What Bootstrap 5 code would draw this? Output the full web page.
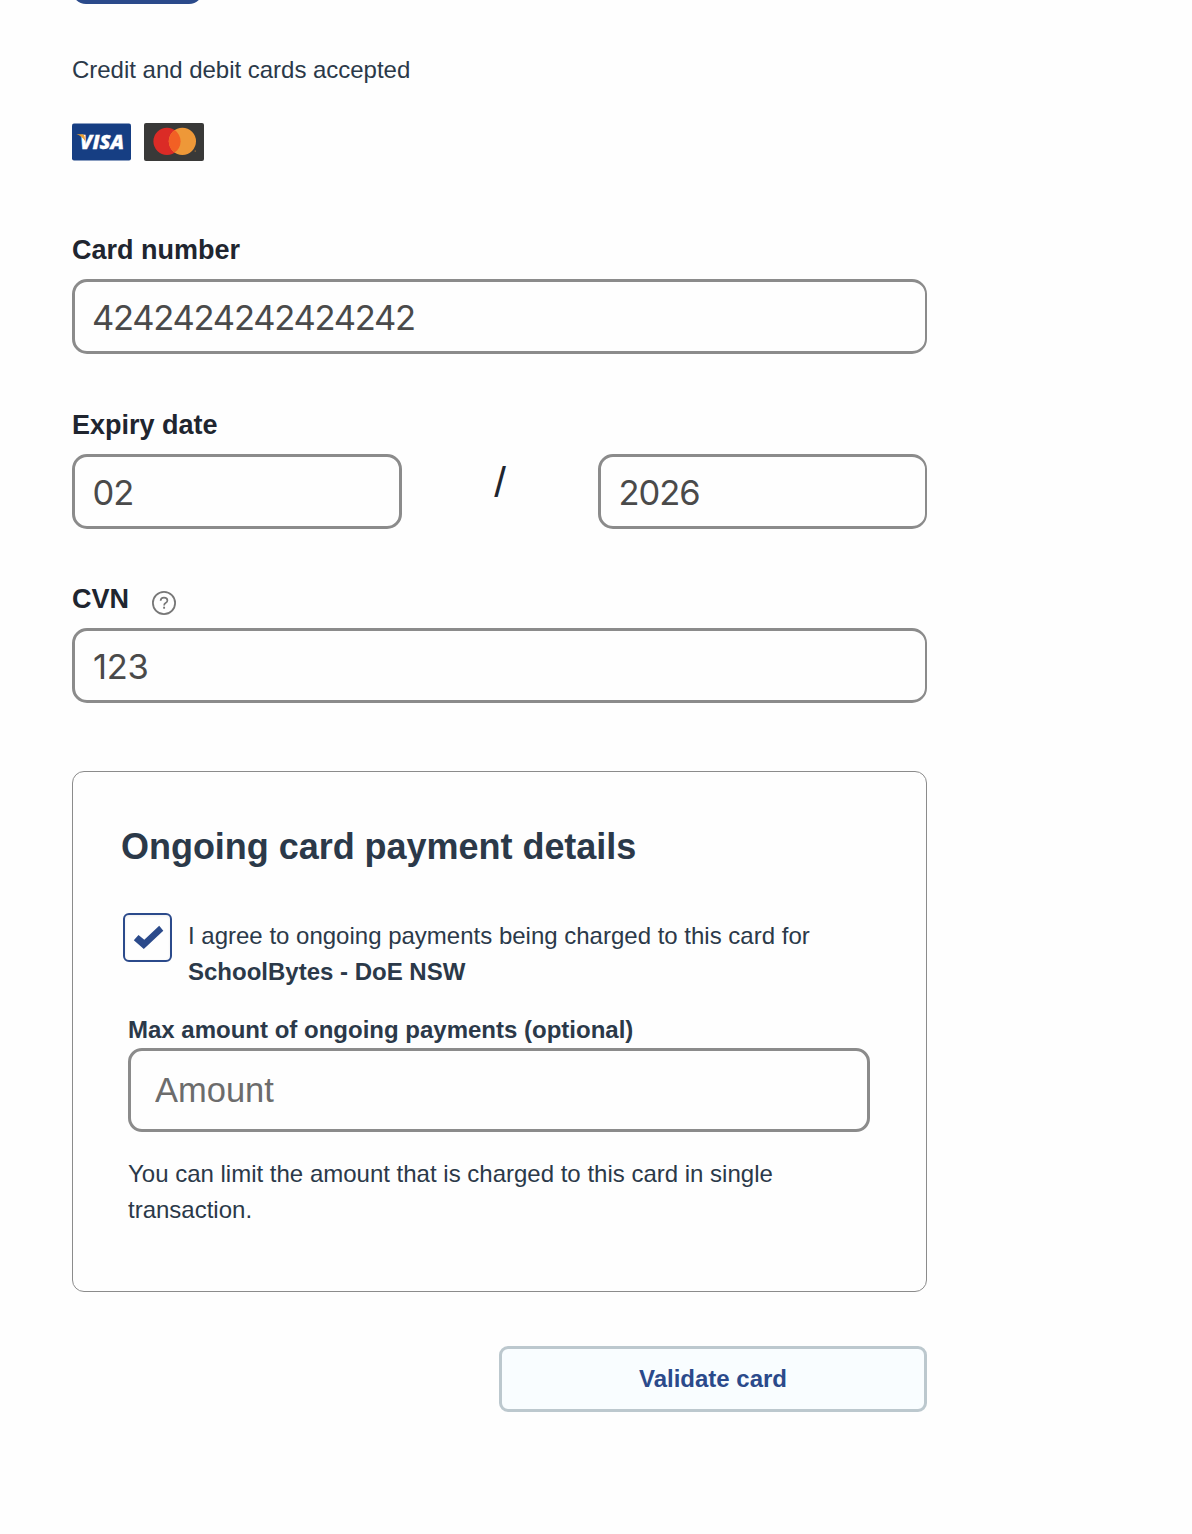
<!DOCTYPE html>
<html lang="en">
<head>
<meta charset="utf-8">
<meta name="viewport" content="width=device-width, initial-scale=1">
<title>Card payment</title>
<link href="https://cdn.jsdelivr.net/npm/bootstrap@5.3.0/dist/css/bootstrap.min.css" rel="stylesheet">
<style>
body{font-family:"Liberation Sans",Arial,sans-serif;font-size:24px;line-height:36px;color:#2b3949;background:#fefefe}
.pay-form{width:855px;margin-left:72px}
.tab-end{width:131px;height:4px;overflow:hidden;display:flex;align-items:flex-end}
.tab-end span{display:block;width:131px;height:40px;flex:none;border-radius:14px;background:#2b4a8b}
.accepted{margin:48px 0 0;letter-spacing:-.02px}
.logos{margin-top:35px;height:38px;gap:13px}
.logos svg{display:block}
.field-label{display:block;font-size:27px;line-height:36px;font-weight:700;color:#20252f}
.form-control.pay-input{height:75px;border:3px solid #8b8b8b;border-radius:15px;background:#fefefe;color:#4a4a4a;font-family:Inter,"Liberation Sans",sans-serif;font-size:34.5px;font-weight:430;padding:2px 17px 0;line-height:1.4;letter-spacing:-1.25px}
.form-control.edge{border-right-width:2px}
.f-number{margin-top:71px}
.f-number .pay-input{margin-top:11px}
.f-expiry{margin-top:53px}
.expiry-row{margin-top:11px}
.f-cvn{margin-top:52px}
.f-cvn .pay-input{margin-top:11px}
.form-control.cvn-input{letter-spacing:-.3px;padding-left:18px}
.form-control.month,.form-control.year{letter-spacing:-1px;padding-left:17.5px}
.month{width:330px}
.year{width:329px}
.slash{font-size:42px;line-height:58px;color:#20252f}
.help{margin:9px 0 0 22px;flex:none}
.agree-box.card{margin-top:68px;height:521px;border:1px solid #8b8b8b;border-radius:12px;background:#fefefe;color:inherit;padding:47px 56px 0 48px}
.agree-box h2{font-size:36px;line-height:56px;font-weight:700;margin:0;color:#2b3949;letter-spacing:-.03px}
.agree{margin:38px 0 0 2px;gap:16px}
.tick{width:49px;height:49px;border:2px solid #2b4a8b;border-radius:6px;flex:none;box-shadow:inset 0 1px 3px #0001}
.agree p{margin:5px 0 0;white-space:nowrap}
.limit{margin:22px 0 0 7px}
.limit label{font-weight:700;display:block}
.form-control.amount{height:84px;border-radius:14px;font-family:"Liberation Sans",Arial,sans-serif;font-weight:400;font-size:34.5px;letter-spacing:0;padding:0 24px;width:742px}
.amount::placeholder{color:#6c6c6c;opacity:1}
.limit p{margin:24px 0 0}
.btn.validate{width:428px;height:66px;margin-top:54px;border:3px solid #bcc8ce;border-radius:9px;background:#f9fdff;color:#2b4a8b;font-size:24px;font-weight:700;line-height:36px;padding:0}
</style>
<script src="https://cdn.jsdelivr.net/npm/bootstrap@5.3.0/dist/js/bootstrap.bundle.min.js"></script>
</head>
<body>
<form class="pay-form">
  <div class="tab-end"><span></span></div>
  <p class="accepted">Credit and debit cards accepted</p>
  <div class="logos d-flex">
    <svg width="59" height="38" viewBox="0 0 59 38" role="img" aria-label="Visa">
      <rect y=".5" width="59" height="37" rx="2" fill="#163e83"/>
      <text x="8" y="25.9" font-family="Open Sans" font-size="19.5" font-weight="800" font-style="italic" fill="#fff" stroke="#fff" stroke-width=".3" textLength="44" lengthAdjust="spacingAndGlyphs">VISA</text>
      <path d="M4.5 11.3H10.5Q12.2 11.5 12.6 13.5L13.4 18.5Q10 13 4.5 11.3Z" fill="#e9a035"/>
    </svg>
    <svg width="60" height="38" viewBox="0 0 60 38" role="img" aria-label="Mastercard">
      <rect width="60" height="38" rx="2" fill="#393938"/>
      <circle cx="23" cy="18.3" r="13.6" fill="#db2b26"/>
      <circle cx="38.4" cy="18.3" r="13.6" fill="#ee9838"/>
      <path d="M30.7 7.1A13.6 13.6 0 0 1 30.7 29.5A13.6 13.6 0 0 1 30.7 7.1Z" fill="#f26024"/>
      <circle cx="51.2" cy="28" r=".6" fill="#ee9838"/>
    </svg>
  </div>

  <div class="f-number">
    <label class="field-label" for="num">Card number</label>
    <input class="form-control pay-input edge" id="num" value="4242424242424242">
  </div>

  <div class="f-expiry">
    <label class="field-label" for="mon">Expiry date</label>
    <div class="expiry-row d-flex justify-content-between">
      <input class="form-control pay-input month" id="mon" value="02">
      <span class="slash">/</span>
      <input class="form-control pay-input edge year" aria-label="Expiry year" value="2026">
    </div>
  </div>

  <div class="f-cvn">
    <div class="d-flex align-items-start">
      <label class="field-label" for="cvn">CVN</label>
      <svg class="help" width="26" height="26" viewBox="0 0 26 26" fill="none" stroke="#777">
        <circle cx="13" cy="13" r="11.1" stroke-width="1.8"/>
        <path d="M9.6 10.8Q9.7 7.7 13 7.7Q16.4 7.7 16.4 10.5Q16.4 12 14.6 13Q13.1 13.8 13.1 15.4" stroke-width="1.7"/>
        <path d="M13.1 16.7V18.7" stroke-width="1.9"/>
      </svg>
    </div>
    <input class="form-control pay-input edge cvn-input" id="cvn" value="123">
  </div>

  <div class="card agree-box">
    <h2>Ongoing card payment details</h2>
    <div class="agree d-flex align-items-start">
      <span class="tick d-flex">
        <svg width="45" height="45" viewBox="0 0 45 45"><path d="M8.8 25.3L13.5 20L19.3 24.8L34.2 10.8L38.3 15.7L18.8 34Z" fill="#2b4a8b"/></svg>
      </span>
      <p>I agree to ongoing payments being charged to this card for<br><strong>SchoolBytes - DoE NSW</strong></p>
    </div>
    <div class="limit">
      <label for="amt">Max amount of ongoing payments (optional)</label>
      <input class="form-control pay-input amount" id="amt" placeholder="Amount">
      <p>You can limit the amount that is charged to this card in single transaction.</p>
    </div>
  </div>

  <div class="d-flex justify-content-end">
    <button type="button" class="btn validate">Validate card</button>
  </div>
</form>
</body>
</html>
